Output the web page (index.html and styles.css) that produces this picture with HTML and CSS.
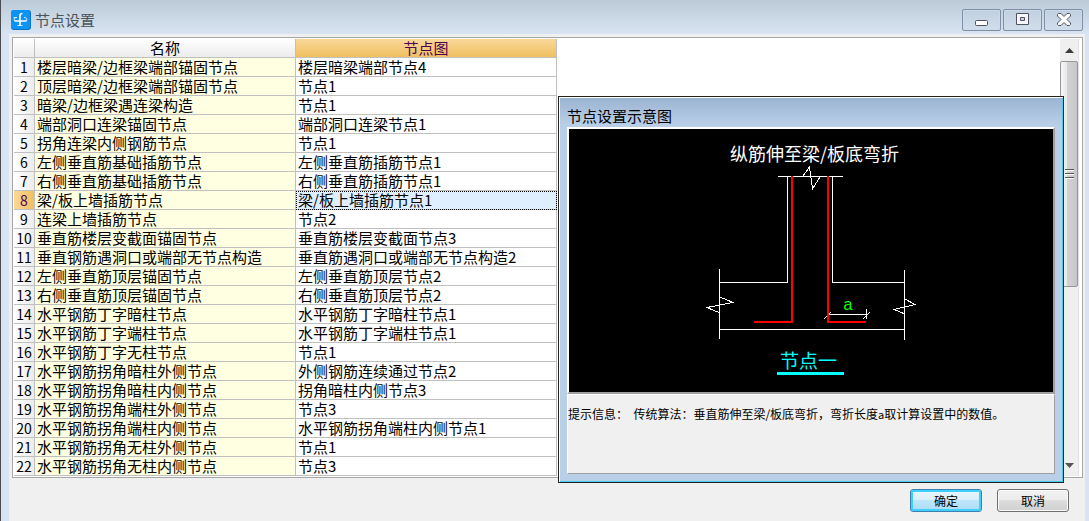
FILE: index.html
```html
<!DOCTYPE html>
<html lang="zh-CN">
<head>
<meta charset="utf-8">
<title>节点设置</title>
<link rel="stylesheet" href="styles.css">
</head>
<body>
<div class="window">
  <header class="titlebar">
    <svg class="app-icon" width="20" height="20" viewBox="0 0 20 20" aria-hidden="true">
      <rect width="20" height="20" rx="3" fill="#0873c9"/>
      <rect width="19" height="19" rx="3" fill="#0c93f3"/>
      <g fill="none" stroke="#fff">
        <path d="M9 15.500V5.500Q9 3.500 11.500 3.500" stroke-width="1.600"/>
        <path d="M3.500 11H15.500" stroke-width="1.500"/>
        <path d="M2.500 7.500H6M4.500 7.500Q2.500 9 3.500 11M13 7.500H14.500Q16.500 9 15.500 11M6.500 15.500H11.500" stroke="#d9efff"/>
      </g>
    </svg>
    <h1 class="title">节点设置</h1>
    <div class="controls">
      <button class="control" type="button" aria-label="最小化"><svg width="14" height="14" viewBox="0 0 14 14"><rect x=".5" y="7.500" width="12" height="5" rx="1" fill="#fff" stroke="#505263"/></svg></button>
      <button class="control" type="button" aria-label="最大化"><svg width="14" height="14" viewBox="0 0 14 14"><path d="M.5.5h12v11h-12zM4.500 4.500h4v3h-4z" fill="#f6f7f9" fill-rule="evenodd" stroke="#505263"/></svg></button>
      <button class="control" type="button" aria-label="关闭"><svg width="14" height="14" viewBox="0 0 14 14"><path d="M1.500.5H4L7 3.500 10 .5h2.500l1 1V3L10 6.500l3.500 3.500v1.500l-1 1H10L7 9.500l-3 3H1.500l-1-1V10L4 6.500.5 3V1.500z" fill="#fff" stroke="#505263" stroke-linejoin="round"/></svg></button>
    </div>
  </header>

  <main class="content">
    <div class="grid-frame">
      <div class="grid-area">
        <table class="grid">
          <colgroup><col class="col-number"><col class="col-text"><col class="col-text"></colgroup>
          <thead><tr><th></th><th>名称</th><th class="active">节点图</th></tr></thead>
          <tbody>
            <tr><th>1</th><td>楼层暗梁/边框梁端部锚固节点</td><td>楼层暗梁端部节点4</td></tr>
            <tr><th>2</th><td>顶层暗梁/边框梁端部锚固节点</td><td>节点1</td></tr>
            <tr><th>3</th><td>暗梁/边框梁遇连梁构造</td><td>节点1</td></tr>
            <tr><th>4</th><td>端部洞口连梁锚固节点</td><td>端部洞口连梁节点1</td></tr>
            <tr><th>5</th><td>拐角连梁内侧钢筋节点</td><td>节点1</td></tr>
            <tr><th>6</th><td>左侧垂直筋基础插筋节点</td><td>左侧垂直筋插筋节点1</td></tr>
            <tr><th>7</th><td>右侧垂直筋基础插筋节点</td><td>右侧垂直筋插筋节点1</td></tr>
            <tr class="selected"><th>8</th><td>梁/板上墙插筋节点</td><td>梁/板上墙插筋节点1</td></tr>
            <tr><th>9</th><td>连梁上墙插筋节点</td><td>节点2</td></tr>
            <tr><th>10</th><td>垂直筋楼层变截面锚固节点</td><td>垂直筋楼层变截面节点3</td></tr>
            <tr><th>11</th><td>垂直钢筋遇洞口或端部无节点构造</td><td>垂直筋遇洞口或端部无节点构造2</td></tr>
            <tr><th>12</th><td>左侧垂直筋顶层锚固节点</td><td>左侧垂直筋顶层节点2</td></tr>
            <tr><th>13</th><td>右侧垂直筋顶层锚固节点</td><td>右侧垂直筋顶层节点2</td></tr>
            <tr><th>14</th><td>水平钢筋丁字暗柱节点</td><td>水平钢筋丁字暗柱节点1</td></tr>
            <tr><th>15</th><td>水平钢筋丁字端柱节点</td><td>水平钢筋丁字端柱节点1</td></tr>
            <tr><th>16</th><td>水平钢筋丁字无柱节点</td><td>节点1</td></tr>
            <tr><th>17</th><td>水平钢筋拐角暗柱外侧节点</td><td>外侧钢筋连续通过节点2</td></tr>
            <tr><th>18</th><td>水平钢筋拐角暗柱内侧节点</td><td>拐角暗柱内侧节点3</td></tr>
            <tr><th>19</th><td>水平钢筋拐角端柱外侧节点</td><td>节点3</td></tr>
            <tr><th>20</th><td>水平钢筋拐角端柱内侧节点</td><td>水平钢筋拐角端柱内侧节点1</td></tr>
            <tr><th>21</th><td>水平钢筋拐角无柱外侧节点</td><td>节点1</td></tr>
            <tr><th>22</th><td>水平钢筋拐角无柱内侧节点</td><td>节点3</td></tr>
          </tbody>
        </table>
      </div>
      <div class="scrollbar">
        <button class="arrow" type="button" aria-label="向上"><svg width="9" height="5" viewBox="0 0 9 5"><path d="M0 5L4.500 0 9 5z" fill="#3c3c3c"/></svg></button>
        <div class="thumb"><svg width="9" height="11" viewBox="0 0 9 11"><path d="M0 1.500h9M0 5.500h9M0 9.500h9" stroke="#fff"/><path d="M0 .5h9M0 4.500h9M0 8.500h9" stroke="#555"/></svg></div>
        <div class="track"></div>
        <button class="arrow" type="button" aria-label="向下"><svg width="9" height="5" viewBox="0 0 9 5"><path d="M0 0L4.500 5 9 0z" fill="#555"/></svg></button>
      </div>
    </div>
    <footer class="actions">
      <button class="action primary" type="button">确定</button>
      <button class="action" type="button">取消</button>
    </footer>
  </main>

  <section class="preview" aria-labelledby="preview-title">
    <h2 class="preview-title" id="preview-title">节点设置示意图</h2>
    <div class="drawing">
      <svg class="diagram" viewBox="569 129 484 263" role="img" aria-label="节点一">
        <g class="outline">
          <path d="M778 176.500H843M787.500 176V282.500H719M832.500 176V282.500H905M719.500 269V339M904.500 270V340M719 329.500H905"/>
          <path d="M803 176L809.500 167 812.500 189 820 177"/>
          <path d="M720 297L733 302.500 707 307.500 720 313"/>
          <path d="M905 299L915 304.500 894 309.500 905 314"/>
          <path d="M828 314.500H867M866.500 309V319M824 319L831 312M863 319L870 312"/>
        </g>
        <path class="rebar" d="M792 176V322H754M828 176V322H866"/>
        <path class="underline" d="M777 373.500H844"/>
        <text class="caption" x="730" y="161">纵筋伸至梁/板底弯折</text>
        <text class="dimension" x="843" y="310">a</text>
        <text class="node-name" x="780" y="368">节点一</text>
      </svg>
    </div>
    <p class="hint">提示信息：&nbsp; 传统算法：垂直筋伸至梁/板底弯折，弯折长度<span class="variable">a</span>取计算设置中的数值。</p>
  </section>
</div>
</body>
</html>
```
FILE: styles.css
```css
* {
  box-sizing: border-box;
}

body {
  margin: 0;
  font-family: "Noto Sans CJK SC", sans-serif;
  font-weight: 400;
  font-size: 15px;
  color: #000;
}

button {
  font: inherit;
  padding: 0;
}

svg {
  display: block;
}

.window {
  position: relative;
  display: flex;
  flex-direction: column;
  min-height: 100vh;
  padding: 0 4px 0 8px;
  border-left: 1px solid #4b4b53;
  background: linear-gradient(#bccad8, #d8e4f2 34px);
}

.titlebar {
  display: flex;
  align-items: center;
  gap: 4px;
  height: 34px;
  padding: 6px 2px 0;
}

.title {
  flex: 1;
  margin: 0;
  font-size: 15px;
  font-weight: 400;
  line-height: 20px;
  color: #4a525b;
}

.controls {
  display: flex;
  gap: 2px;
}

.control {
  display: flex;
  align-items: center;
  justify-content: center;
  width: 39px;
  height: 22px;
  border: 1px solid #7f8ea9;
  border-radius: 2px;
  background: linear-gradient(#c0cfdf, #d1deec);
  box-shadow: inset 0 0 0 1px #cfdae8;
}

.content {
  display: flex;
  flex: 1;
  flex-direction: column;
  padding: 3px 2px 0 3px;
  background: #f0f0f0;
}

.grid-frame {
  display: flex;
  padding: 1px;
  border: 1px solid #a7a7a7;
  background: #fff;
}

.grid-area {
  flex: 1;
}

.grid {
  table-layout: fixed;
  width: 543px;
  border-spacing: 0;
}

.col-number {
  width: 21px;
}

.grid th,
.grid td {
  height: 19px;
  padding: 0 2px;
  border-right: 1px solid #c0c0c0;
  border-bottom: 1px solid #c0c0c0;
  font-weight: 400;
  line-height: 18px;
  white-space: nowrap;
}

.grid th {
  padding: 0;
  background: linear-gradient(#fff, #ececec);
}

.grid tbody th {
  background: linear-gradient(90deg, #fff, #ececec);
  font-size: 14px;
}

.grid td {
  background: #fff;
}

.grid td:nth-child(2) {
  background: #ffffe1;
}

.grid thead .active {
  background: linear-gradient(#f9d89b, #f0c060);
  color: #500050;
}

.grid .selected th {
  background: linear-gradient(90deg, #f9d89b, #f0c060);
  color: #500050;
}

.grid .selected td:last-child {
  background: #dfefff;
  outline: 1px dotted #000;
  outline-offset: -1px;
}

.scrollbar {
  display: flex;
  flex-direction: column;
  width: 21px;
  border-right: 2px solid #fff;
  background: #efefef;
  box-shadow: inset -1px 0 #e3e3e3;
}

.arrow {
  display: flex;
  align-items: center;
  justify-content: center;
  height: 22px;
  border: 0;
  background: none;
}

.thumb {
  display: flex;
  flex: 226;
  align-items: center;
  justify-content: center;
  margin-right: 1px;
  border: 1px solid #979797;
  border-radius: 2px;
  background: linear-gradient(90deg, #f6f6f6, #e9e9eb 35%, #d3d3d6 40%, #c6c6ca);
}

.track {
  flex: 168;
}

.actions {
  display: flex;
  gap: 15px;
  justify-content: flex-end;
  padding: 11px 14px 8px;
}

.action {
  width: 72px;
  height: 23px;
  border: 1px solid #707070;
  border-radius: 3px;
  background: linear-gradient(#f3f3f3, #ebebeb 50%, #dddddd 50%, #cfcfcf);
  box-shadow: inset 0 0 0 1px #fafafa;
  font-size: 12px;
  line-height: 20px;
}

.action.primary {
  border-color: #3c7fb1;
  background: linear-gradient(#e8f5fc, #d8effb 50%, #bee6fb 50%, #acdcf6);
  box-shadow: inset 0 0 0 2px #3ed0f8;
}

.preview {
  position: absolute;
  top: 96px;
  right: 25px;
  width: 506px;
  padding: 1px 8px 8px;
  border: 1px solid #222;
  background: linear-gradient(#9ab3d1, #b9cfe8 28px);
  box-shadow: inset 1px 1px #fff, inset -1px -1px #45cdf0;
}

.preview-title {
  margin: 0;
  padding: 7px 0 1px;
  font-size: 15px;
  font-weight: 400;
  line-height: 21px;
}

.drawing {
  border: 2px solid #fff;
  border-right-color: #a0a0a0;
  border-bottom-color: #a0a0a0;
  background: #000;
}

.diagram {
  width: 100%;
}

.outline,
.rebar,
.underline {
  fill: none;
  shape-rendering: crispEdges;
}

.outline {
  stroke: #fff;
}

.rebar {
  stroke: #f00;
  stroke-width: 2;
}

.underline {
  stroke: #0ff;
  stroke-width: 3;
}

.caption {
  fill: #fff;
  font-size: 18px;
}

.dimension {
  fill: #0f0;
  font-family: "Liberation Mono", monospace;
  font-size: 17px;
}

.node-name {
  fill: #0ff;
  font-size: 19px;
}

.hint {
  height: 80px;
  margin: 0;
  padding: 10px 0 0;
  border: 1px solid #fff;
  border-right-color: #a0a0a0;
  border-bottom-color: #a0a0a0;
  background: #f0f0f0;
  font-size: 12px;
  line-height: 18px;
}

.variable {
  font-size: 11px;
}
```
